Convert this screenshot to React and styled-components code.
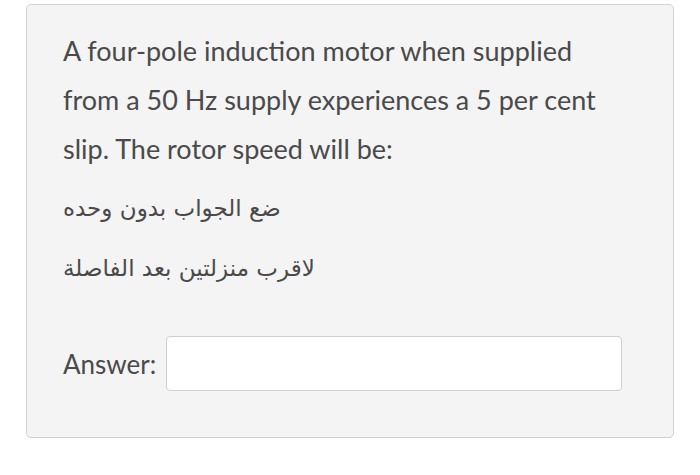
import React from 'react';
import styled, { createGlobalStyle } from 'styled-components';

const GlobalStyle = createGlobalStyle`
  body {
    margin: 0;
    background: #ffffff;
    font-family: Lato, "Open Sans", sans-serif;
  }
`;

const Page = styled.div`
  width: 700px;
  height: 475px;
  padding: 4px 26px 0 26px;
  box-sizing: border-box;
`;

const Card = styled.div`
  height: 434px;
  box-sizing: border-box;
  background: #f4f4f4;
  border: 1px solid #d2d2d2;
  border-radius: 5px;
  padding: 21px 36px 0 36px;
  color: #4a4a4a;
`;

const Question = styled.p`
  margin: 0;
  max-width: 550px;
  font-size: 27px;
  line-height: 49px;
`;

const Note = styled.p`
  margin: ${(p) => p.$top}px 0 0 0;
  font-family: "DejaVu Sans", sans-serif;
  font-size: 23px;
  line-height: 30px;
  direction: rtl;
  text-align: left;
  unicode-bidi: plaintext;
`;

const AnswerRow = styled.div`
  display: flex;
  align-items: center;
  gap: 10px;
  margin-top: 53px;
`;

const Label = styled.label`
  font-size: 26px;
`;

const Input = styled.input`
  width: 456px;
  height: 55px;
  box-sizing: border-box;
  background: #ffffff;
  border: 1px solid #cfcfcf;
  border-radius: 4px;
  font-size: 20px;
  padding: 0 10px;
  &:focus {
    outline: none;
  }
`;

const App = () => (
  <Page>
    <GlobalStyle />
    <Card>
      <Question>
        A four-pole induction motor when supplied from a 50 Hz supply experiences a 5 per cent slip. The
        rotor speed will be:
      </Question>
      <Note $top={20}>ضع الجواب بدون وحده</Note>
      <Note $top={30}>لاقرب منزلتين بعد الفاصلة</Note>
      <AnswerRow>
        <Label>Answer:</Label>
        <Input type="text" />
      </AnswerRow>
    </Card>
  </Page>
);

export default App;
